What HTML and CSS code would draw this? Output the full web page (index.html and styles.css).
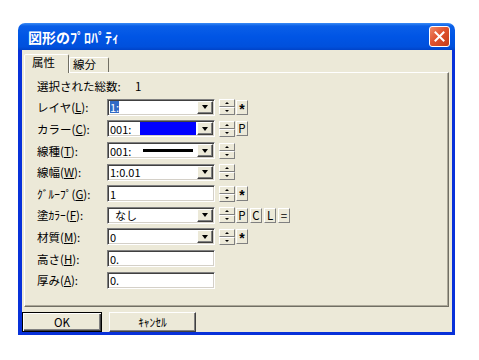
FILE: index.html
```html
<!DOCTYPE html>
<html lang="ja">

<head>
    <meta charset="UTF-8">
    <title>図形のﾌﾟﾛﾊﾟﾃｨ</title>
    <link rel="stylesheet" href="styles.css">
</head>

<body>
    <div class="dialog">
        <div class="titlebar">
            <span class="title">図形のﾌﾟﾛﾊﾟﾃｨ</span>
            <button class="close">
                <svg width="11" height="11" viewBox="0 0 11 11">
                    <path d="M1.5 1.5 L9.5 9.5 M9.5 1.5 L1.5 9.5" stroke="#fff" stroke-width="2" stroke-linecap="square" />
                </svg>
            </button>
        </div>
        <div class="client">
            <div class="tabs">
                <div class="tab active">属性</div>
                <div class="tab">線分</div>
            </div>
            <div class="panel">
                <div class="row">
                    <span class="label summary">選択された総数:</span><span>1</span>
                </div>
                <div class="row">
                    <span class="label">レイヤ(<u>L</u>):</span>
                    <div class="field"><span class="val"><span class="sel">1:</span></span><span class="drop"></span></div>
                    <div class="spin"><span class="up"></span><span class="dn"></span></div>
                    <span class="key star">*</span>
                </div>
                <div class="row">
                    <span class="label">カラー(<u>C</u>):</span>
                    <div class="field"><span class="val">001:</span><span class="swatch"></span><span class="drop"></span></div>
                    <div class="spin"><span class="up"></span><span class="dn"></span></div>
                    <span class="key">P</span>
                </div>
                <div class="row">
                    <span class="label">線種(<u>T</u>):</span>
                    <div class="field"><span class="val">001:</span><span class="line"></span><span class="drop"></span></div>
                    <div class="spin"><span class="up"></span><span class="dn"></span></div>
                </div>
                <div class="row">
                    <span class="label">線幅(<u>W</u>):</span>
                    <div class="field"><span class="val">1:0.01</span><span class="drop"></span></div>
                    <div class="spin"><span class="up"></span><span class="dn"></span></div>
                </div>
                <div class="row">
                    <span class="label">ｸﾞﾙｰﾌﾟ(<u>G</u>):</span>
                    <div class="field"><span class="val">1</span></div>
                    <div class="spin"><span class="up"></span><span class="dn"></span></div>
                    <span class="key star">*</span>
                </div>
                <div class="row">
                    <span class="label">塗ｶﾗｰ(<u>F</u>):</span>
                    <div class="field"><span class="val indent">なし</span><span class="drop"></span></div>
                    <div class="spin"><span class="up"></span><span class="dn"></span></div>
                    <span class="key">P</span>
                    <span class="key">C</span>
                    <span class="key">L</span>
                    <span class="key">=</span>
                </div>
                <div class="row">
                    <span class="label">材質(<u>M</u>):</span>
                    <div class="field"><span class="val">0</span><span class="drop"></span></div>
                    <div class="spin"><span class="up"></span><span class="dn"></span></div>
                    <span class="key star">*</span>
                </div>
                <div class="row">
                    <span class="label">高さ(<u>H</u>):</span>
                    <div class="field"><span class="val">0.</span></div>
                </div>
                <div class="row">
                    <span class="label">厚み(<u>A</u>):</span>
                    <div class="field"><span class="val">0.</span></div>
                </div>
            </div>
            <div class="buttons">
                <button class="btn default">OK</button>
                <button class="btn cancel">ｷｬﾝｾﾙ</button>
            </div>
        </div>
    </div>
</body>

</html>
```

FILE: styles.css
```css
* {
    margin: 0;
    padding: 0;
    box-sizing: border-box;
}

body {
    background-color: #fff;
    font-family: "Noto Sans CJK JP", sans-serif;
    font-size: 11.5px;
    color: #000;
}

.dialog {
    width: 437px;
    margin: 23px 0 0 18px;
}

.titlebar {
    height: 27px;
    border-radius: 7px 7px 0 0;
    background: linear-gradient(#3b8cf5 0, #0a5fe8 3px, #0055e5 50%, #0050dc 88%, #0043c8 100%);
    display: flex;
    align-items: center;
    padding: 0 5px 0 10px;
}

.title {
    flex: 1;
    color: #fff;
    font-weight: bold;
    font-size: 14px;
}

.close {
    width: 21px;
    height: 21px;
    border: 1px solid #fff;
    border-radius: 3px;
    background: linear-gradient(135deg, #ef8a6a, #e0532f 45%, #c43c17);
    display: flex;
    align-items: center;
    justify-content: center;
}

.client {
    background-color: #ece9d8;
    border: 0 solid #0831d9;
    border-width: 0 3px 3px 4px;
    padding-top: 4px;
}

/* tabs */
.tabs {
    display: flex;
    align-items: flex-end;
    height: 18px;
    margin-left: 2px;
}

.tab {
    height: 15px;
    border: 1px solid;
    border-bottom: 0;
    border-color: #fff #716f64 transparent #fff;
    border-radius: 2px 2px 0 0;
    line-height: 12px;
    padding-left: 3px;
    width: 40px;
}

.tab.active {
    position: relative;
    z-index: 1;
    height: 19px;
    margin-bottom: -1px;
    width: 45px;
    padding-left: 7px;
    line-height: 14px;
    background-color: #ece9d8;
}

.panel {
    height: 235px;
    margin: 0 3px 0 2px;
    border: 1px solid;
    border-color: #fff #716f64 #716f64 #fff;
    box-shadow: inset -1px -1px #aca899;
    padding: 2px 0 0 12px;
}

.row {
    display: flex;
    align-items: center;
    height: 21.6px;
}

.label {
    width: 70px;
    flex: none;
    white-space: nowrap;
}

.summary {
    width: 98px;
}

/* inputs */
.field {
    width: 108px;
    height: 17px;
    flex: none;
    display: flex;
    margin-right: 4px;
    padding: 1px;
    background-color: #fff;
    border: 1px solid;
    border-color: #808080 #fff #fff #808080;
    box-shadow: inset 1px 1px #404040, inset -1px -1px #d4d0c8;
}

.val {
    flex: 1;
    display: flex;
    align-items: center;
    padding-left: 1px;
    font-size: 11px;
    white-space: nowrap;
    overflow: hidden;
}

.val.indent {
    padding-left: 6px;
}

.sel {
    background-color: #316ac5;
    color: #fff;
    line-height: 12px;
}

.swatch {
    width: 56px;
    margin-right: 1px;
    background-color: #0000ff;
}

.line {
    width: 50px;
    height: 3px;
    align-self: center;
    margin-right: 4px;
    background-color: #000;
}

.drop {
    width: 16px;
    flex: none;
    display: flex;
    align-items: center;
    justify-content: center;
    background-color: #ece9d8;
    border: 1px solid;
    border-color: #fff #404040 #404040 #fff;
    box-shadow: inset -1px -1px #808080;
}

.drop::after {
    content: "";
    border-style: solid;
    border-width: 4px 3.5px 0;
    border-color: #000 transparent transparent;
}

.spin {
    width: 16px;
    height: 16px;
    flex: none;
    display: flex;
    flex-direction: column;
    margin-right: 1px;
}

.spin span {
    flex: 1;
    display: flex;
    align-items: center;
    justify-content: center;
    background-color: #ece9d8;
    border: 1px solid;
    border-color: #fff #808080 #808080 #fff;
}

.spin .up::after {
    content: "";
    border-style: solid;
    border-width: 0 2px 2px;
    border-color: transparent transparent #000;
}

.spin .dn::after {
    content: "";
    border-style: solid;
    border-width: 2px 2px 0;
    border-color: #000 transparent transparent;
}

.key {
    width: 12px;
    height: 15px;
    flex: none;
    margin-right: 2px;
    text-align: center;
    line-height: 13px;
    font-size: 11.5px;
    background-color: #ece9d8;
    border: 1px solid;
    border-color: #fff #808080 #808080 #fff;
}

.key.star {
    font-family: "Liberation Sans", sans-serif;
    font-size: 14px;
    font-weight: bold;
    line-height: 16px;
}

/* bottom buttons */
.buttons {
    display: flex;
    margin-top: 5px;
}

.btn {
    height: 20px;
    font-family: "Noto Sans CJK JP", sans-serif;
    font-size: 11.5px;
    color: #000;
    background-color: #ece9d8;
    border: 1px solid;
    border-color: #fff #404040 #404040 #fff;
    box-shadow: inset -1px -1px #808080;
}

.btn.default {
    width: 80px;
    border-color: #000;
    box-shadow: inset 1px 1px #fff, inset -1px -1px #404040, inset -2px -2px #808080;
}

.btn.cancel {
    width: 87px;
    margin-left: 7px;
}
```
